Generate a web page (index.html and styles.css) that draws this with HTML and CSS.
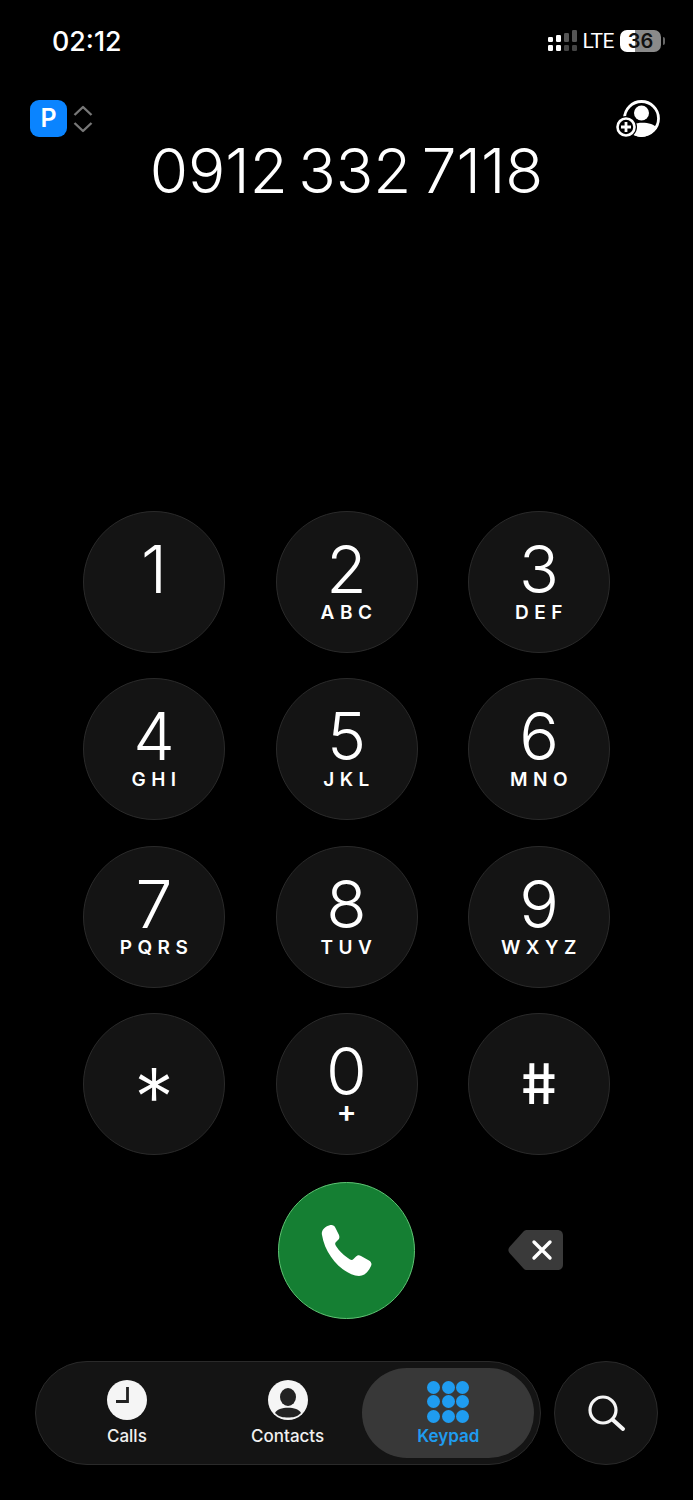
FILE: index.html
```html
<!DOCTYPE html>
<html lang="en">
<head>
    <meta charset="UTF-8">
    <title>Keypad</title>
    <link rel="stylesheet" href="styles.css">
</head>
<body>
    <div class="phone">
        <div class="status-bar">
            <span class="clock">02:12</span>
            <div class="status-right">
                <svg class="signal" width="30" height="24" viewBox="0 0 30 24">
                    <rect x="1" y="8" width="5" height="5" rx="1.2" fill="#fff"/>
                    <rect x="1" y="16" width="5" height="6" rx="1.2" fill="#fff"/>
                    <rect x="9" y="6" width="5" height="7" rx="1.2" fill="#fff"/>
                    <rect x="9" y="16" width="5" height="6" rx="1.2" fill="#fff"/>
                    <rect x="17" y="4" width="5" height="9" rx="1.2" fill="#555"/>
                    <rect x="17" y="16" width="5" height="6" rx="1.2" fill="#444"/>
                    <rect x="25" y="1" width="5" height="12" rx="1.2" fill="#555"/>
                    <rect x="25" y="16" width="5" height="6" rx="1.2" fill="#444"/>
                </svg>
                <span class="lte">LTE</span>
                <div class="battery"><span class="battery-level">36</span></div>
                <span class="battery-tip"></span>
            </div>
        </div>

        <div class="top-row">
            <div class="sim-select">
                <span class="sim-badge">P</span>
                <svg width="22" height="30" viewBox="0 0 22 30" fill="none" stroke="#777" stroke-width="2.400" stroke-linejoin="round">
                    <path d="M2.500 11 L11 3 L19.500 11"/>
                    <path d="M2.500 19 L11 27 L19.500 19"/>
                </svg>
            </div>
            <svg class="add-contact" width="45" height="38" viewBox="0 0 45 38">
                <circle cx="25.500" cy="18.500" r="17" fill="none" stroke="#fff" stroke-width="2.800"/>
                <circle cx="25.500" cy="13" r="7.500" fill="#fff"/>
                <path d="M12 29 C15 21 36 21 41 28 C36 34 30 37 25 37 C20 37 15 33 12 29 Z" fill="#fff"/>
                <circle cx="10" cy="27" r="11" fill="#000"/>
                <circle cx="10" cy="27" r="8.500" fill="none" stroke="#fff" stroke-width="2.600"/>
                <path d="M10 22 V32 M5 27 H15" stroke="#fff" stroke-width="2.800"/>
            </svg>
        </div>

        <div class="number">0912 332 7118</div>

        <div class="keypad">
            <div class="key"><span class="digit">1</span></div>
            <div class="key"><span class="digit">2</span><span class="letters">ABC</span></div>
            <div class="key"><span class="digit">3</span><span class="letters">DEF</span></div>
            <div class="key"><span class="digit">4</span><span class="letters">GHI</span></div>
            <div class="key"><span class="digit">5</span><span class="letters">JKL</span></div>
            <div class="key"><span class="digit">6</span><span class="letters">MNO</span></div>
            <div class="key"><span class="digit">7</span><span class="letters">PQRS</span></div>
            <div class="key"><span class="digit">8</span><span class="letters">TUV</span></div>
            <div class="key"><span class="digit">9</span><span class="letters">WXYZ</span></div>
            <div class="key key-symbol"><span class="digit star">*</span></div>
            <div class="key"><span class="digit">0</span><span class="letters plus">+</span></div>
            <div class="key key-symbol"><span class="digit hash">#</span></div>
        </div>

        <div class="call-row">
            <div class="call-button">
                <svg class="handset" width="54" height="54" viewBox="0 0 54 54">
                    <path fill="#fff" d="M3 12 C2 8 5 4 10 2.500 C13 1.500 15 2 16.500 5 L20 12 C21 15 20 16.500 18 18 L16.500 19.500 C16 20.500 16 21.500 17 23 C20 28 25.500 33 31 36.500 C32.500 37.200 33.500 37 34.500 36 L36.500 34 C38.500 32 40 32 42 33 L50 37.500 C52.500 39 53 41 52 43 C49.500 49 45 53 40 53 C24 52 6 32 3 12 Z"/>
                </svg>
            </div>
            <svg class="backspace" width="56" height="40" viewBox="0 0 56 40">
                <path fill="#3a3a3a" d="M19 0 H49 C53 0 55 2 55 6 V34 C55 38 53 40 49 40 H19 C17.500 40 16.500 39.500 15.500 38.500 L1.500 23 C0 21 0 19 1.500 17 L15.500 1.500 C16.500 0.500 17.500 0 19 0 Z"/>
                <path d="M26 12 L42 28 M42 12 L26 28" stroke="#fff" stroke-width="3.400" stroke-linecap="round"/>
            </svg>
        </div>

        <div class="bottom-row">
            <nav class="tab-bar">
                <div class="tab">
                    <svg width="40" height="40" viewBox="0 0 40 40">
                        <circle cx="20" cy="20" r="20" fill="#f5f5f5"/>
                        <path d="M20.500 7 V21.500 H9" fill="none" stroke="#222" stroke-width="2.800"/>
                    </svg>
                    <span class="tab-label">Calls</span>
                </div>
                <div class="tab">
                    <svg width="40" height="40" viewBox="0 0 40 40">
                        <circle cx="20" cy="20" r="20" fill="#f5f5f5"/>
                        <ellipse cx="20" cy="17" rx="8" ry="9" fill="#222"/>
                        <path d="M7 33 C10 26 30 26 33 33 C29 37 25 37.500 20 37.500 C15 37.500 11 37 7 33 Z" fill="#222"/>
                    </svg>
                    <span class="tab-label">Contacts</span>
                </div>
                <div class="tab tab-active">
                    <div class="dots">
                        <i></i><i></i><i></i><i></i><i></i><i></i><i></i><i></i><i></i>
                    </div>
                    <span class="tab-label">Keypad</span>
                </div>
            </nav>
            <div class="search-button">
                <svg width="40" height="40" viewBox="0 0 40 40" fill="none" stroke="#f5f5f5" stroke-linecap="round">
                    <circle cx="17" cy="17" r="13" stroke-width="3.200"/>
                    <path d="M27 27 L37 36" stroke-width="4"/>
                </svg>
            </div>
        </div>
    </div>
</body>
</html>
```

FILE: styles.css
```css
html, body {
    margin: 0;
    background: #000;
}

body {
    color: #fff;
    font-family: Inter, "Liberation Sans", sans-serif;
}

.phone {
    width: 693px;
    height: 1500px;
    overflow: hidden;
}

.status-bar {
    display: flex;
    justify-content: space-between;
    align-items: center;
    height: 30px;
    padding: 26px 28px 0 52px;
}

.clock {
    font-size: 26.800px;
    font-weight: 500;
}

.status-right {
    display: flex;
    align-items: center;
}

.signal {
    margin-right: 6px;
}

.lte {
    font-family: Roboto, sans-serif;
    font-size: 21px;
    letter-spacing: -0.500px;
    margin-right: 6px;
}

.battery {
    width: 41px;
    height: 22px;
    border-radius: 7px;
    background: linear-gradient(to right, #fff 0 36%, #8a8a8a 36% 100%);
    color: #111;
    font-size: 20px;
    font-weight: 600;
    line-height: 22px;
    text-align: center;
}

.battery-tip {
    width: 2px;
    height: 8px;
    margin-left: 2px;
    background: #666;
    border-radius: 0 2px 2px 0;
}

.top-row {
    display: flex;
    justify-content: space-between;
    align-items: flex-start;
    height: 48px;
    padding: 44px 32px 0 30px;
}

.sim-select {
    display: flex;
    align-items: center;
    gap: 5px;
}

.sim-badge {
    width: 37px;
    height: 37px;
    border-radius: 9px;
    background: #0a84ff;
    font-size: 25px;
    font-weight: 600;
    line-height: 37px;
    text-align: center;
}

.number {
    height: 68px;
    margin-top: -11px;
    font-size: 62px;
    font-weight: 350;
    line-height: 68px;
    word-spacing: -7px;
    text-align: center;
}

.keypad {
    display: grid;
    grid-template-columns: repeat(3, 142px);
    column-gap: 50.500px;
    row-gap: 25.300px;
    margin: 306px 0 0 83px;
}

.key {
    display: flex;
    flex-direction: column;
    align-items: center;
    box-sizing: border-box;
    width: 142px;
    height: 142px;
    padding-top: 19px;
    border: 1px solid #2a2a2a;
    border-radius: 50%;
    background: #141414;
}

.digit {
    height: 64px;
    font-size: 66px;
    font-weight: 350;
    line-height: 76px;
}

.letters {
    margin-top: 7px;
    padding-left: 5px;
    font-size: 19px;
    font-weight: 600;
    letter-spacing: 5.500px;
    line-height: 22px;
}

.plus {
    font-size: 30px;
    font-weight: 600;
    padding-left: 0;
    letter-spacing: 0;
    margin-top: 3px;
}

.key-symbol {
    justify-content: center;
    padding-top: 0;
}

.star {
    height: 50px;
    font-size: 80px;
    line-height: 75px;
}

.hash {
    height: 50px;
    font-size: 56px;
    font-weight: 500;
    line-height: 50px;
    transform: skewX(9deg);
}

.call-row {
    display: flex;
    align-items: center;
    height: 138px;
    margin-top: 26.600px;
    padding-left: 278px;
}

.call-button {
    display: flex;
    justify-content: center;
    align-items: center;
    box-sizing: border-box;
    width: 137px;
    height: 137px;
    border: 1px solid #5fc474;
    border-radius: 50%;
    background: #157f33;
}

.handset {
    margin-left: -2px;
}

.backspace {
    margin-left: 93px;
}

.bottom-row {
    display: flex;
    gap: 13px;
    margin: 42px 0 0 35px;
}

.tab-bar {
    display: flex;
    align-items: center;
    box-sizing: border-box;
    width: 506px;
    height: 104px;
    padding: 0 6px 0 0;
    border: 1px solid #2a2a2a;
    border-radius: 52px;
    background: #141414;
}

.tab {
    display: flex;
    flex-direction: column;
    align-items: center;
    gap: 6px;
    font-size: 17px;
}

.tab:nth-child(1) {
    width: 92px;
    margin-left: 45px;
}

.tab:nth-child(2) {
    width: 92px;
    margin-left: 69px;
}

.tab-label {
    color: #f0f0f0;
    font-weight: 500;
}

.tab-active {
    justify-content: center;
    gap: 3px;
    width: 172px;
    height: 90px;
    margin-left: 29px;
    border-radius: 45px;
    background: #383838;
}

.tab-active .tab-label {
    color: #1f9cf0;
    font-weight: 600;
}

.dots {
    display: grid;
    grid-template-columns: repeat(3, 13px);
    gap: 1.500px;
}

.dots i {
    width: 13px;
    height: 13px;
    border-radius: 50%;
    background: #1f9cf0;
}

.search-button {
    display: flex;
    justify-content: center;
    align-items: center;
    box-sizing: border-box;
    width: 104px;
    height: 104px;
    border: 1px solid #2a2a2a;
    border-radius: 50%;
    background: #141414;
}
```
